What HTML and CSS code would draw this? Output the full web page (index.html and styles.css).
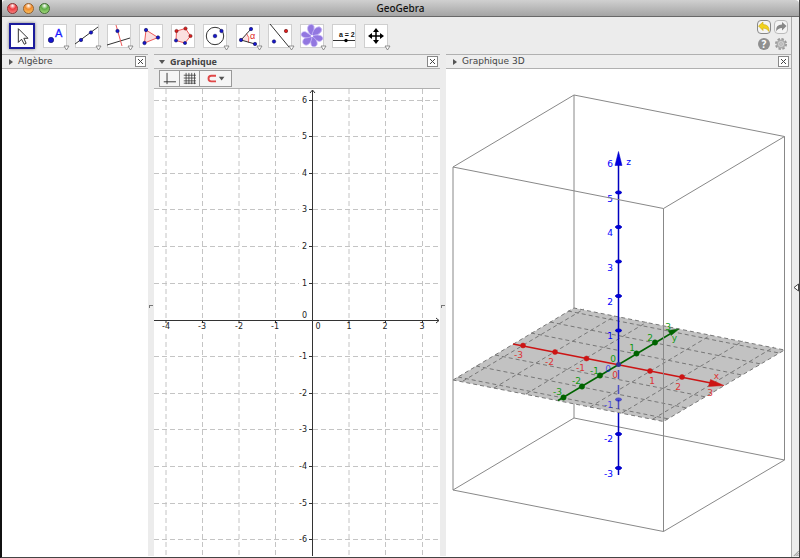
FILE: index.html
```
<!DOCTYPE html>
<html lang="fr">

<head>
  <meta charset="UTF-8" />
  <meta name="viewport" content="width=device-width, initial-scale=1.0" />
  <title>GeoGebra</title>
  <link rel="stylesheet" href="styles.css">
</head>

<body>
  <div class="window">
    <header class="titlebar">
      <div class="lights">
        <button class="light red" aria-label="Fermer"></button>
        <button class="light orange" aria-label="Réduire"></button>
        <button class="light green" aria-label="Agrandir"></button>
      </div>
      <h1 class="title">GeoGebra</h1>
    </header>

    <div class="body">
      <div class="main">
        <div class="toolbar">
          <div class="tools">
            <button class="tool active" aria-label="Déplacer">
              <svg viewBox="0 0 24 24"><path d="M8 4v15l3.500-3.500 3 5.500 2-1-2.500-5.500h4.500z" fill="#fff" stroke="#222" /></svg>
            </button>
            <button class="tool" aria-label="Point">
              <svg viewBox="0 0 24 24">
                <circle class="blue" cx="8" cy="16" r="2.700" />
                <text x="12" y="13" class="letter">A</text>
                <path class="drop" d="M21 22h5l-2.500 4z" />
              </svg>
            </button>
            <button class="tool" aria-label="Droite">
              <svg viewBox="0 0 24 24">
                <path class="ink" d="M0 20L23 3" />
                <circle class="blue" cx="6" cy="16" r="1.700" /><circle class="blue" cx="16" cy="8.500" r="1.700" />
                <path class="drop" d="M21 22h5l-2.500 4z" />
              </svg>
            </button>
            <button class="tool" aria-label="Perpendiculaire">
              <svg viewBox="0 0 24 24">
                <path class="ink" d="M0 21L23 14" /><path class="rose" d="M9 1L15 22" />
                <circle class="blue" cx="10.500" cy="7" r="1.700" />
                <path class="drop" d="M21 22h5l-2.500 4z" />
              </svg>
            </button>
            <button class="tool" aria-label="Polygone">
              <svg viewBox="0 0 24 24">
                <path class="rose area" d="M7 6l12 7.500L5.500 19z" />
                <circle class="blue" cx="7" cy="6" r="1.700" /><circle class="blue" cx="19" cy="13.500" r="1.700" /><circle class="blue" cx="5.500" cy="19" r="1.700" />
              </svg>
            </button>
            <button class="tool" aria-label="Polygone régulier">
              <svg viewBox="0 0 24 24">
                <path class="rose area" d="M5.500 7l9-2.500 5 7.500-5.500 7-9-2.500z" />
                <circle class="crimson" cx="5.500" cy="7" r="1.600" /><circle class="crimson" cx="14.500" cy="4.500" r="1.600" /><circle class="crimson" cx="19.500" cy="12" r="1.600" />
                <circle class="blue" cx="14" cy="19" r="1.600" /><circle class="blue" cx="5" cy="16.500" r="1.600" />
              </svg>
            </button>
            <button class="tool" aria-label="Cercle">
              <svg viewBox="0 0 24 24">
                <circle class="ink" cx="12" cy="12" r="8.700" />
                <circle class="blue" cx="12" cy="12" r="1.800" /><circle class="blue" cx="18.500" cy="7" r="1.700" />
                <path class="drop" d="M21 22h5l-2.500 4z" />
              </svg>
            </button>
            <button class="tool" aria-label="Angle">
              <svg viewBox="0 0 24 24">
                <path d="M5 16l5.500-5.500a8 8 0 0 1 2 8z" class="area" />
                <path d="M10.500 9.500a9 9 0 0 1 2 9" class="rose" />
                <path class="ink" d="M15 5L5 16l14 4" />
                <circle class="blue" cx="5" cy="16" r="1.700" /><circle class="blue" cx="15" cy="5" r="1.700" /><circle class="blue" cx="19" cy="20" r="1.700" />
                <text x="14" y="15" class="alpha">α</text>
                <path class="drop" d="M21 22h5l-2.500 4z" />
              </svg>
            </button>
            <button class="tool" aria-label="Symétrie axiale">
              <svg viewBox="0 0 24 24">
                <path class="ink" d="M2 0l19 23" />
                <circle class="blue" cx="6" cy="17.500" r="1.700" /><circle class="crimson" cx="18" cy="7" r="1.700" />
                <path class="drop" d="M21 22h5l-2.500 4z" />
              </svg>
            </button>
            <button class="tool" aria-label="Image">
              <svg viewBox="0 0 24 24">
                <g class="petals">
                  <path d="M12 12C8 9 6 4 9 1q3-2 5 1 1 4-2 10z" />
                  <path d="M12 12C12 7 16 2 20 3q3 2 1 5-3 4-9 4z" />
                  <path d="M12 12c5-2 10-1 11 2 0 3-4 4-5 3-3-1-5-2-6-5z" />
                  <path d="M12 12c4 3 6 6 5 9-2 3-6 2-6-1-1-3 0-5 1-8z" />
                  <path d="M12 12c0 5-3 10-7 9-4-2-2-6 0-7z" />
                  <path d="M12 12C8 15 2 14 1 11c0-3 3-4 5-3z" />
                </g>
                <circle cx="12" cy="12" r="1" fill="#fff" />
                <path class="drop" d="M21 22h5l-2.500 4z" />
              </svg>
            </button>
            <button class="tool" aria-label="Curseur">
              <svg viewBox="0 0 24 24">
                <text x="7" y="13" class="slider">a = 2</text>
                <path class="ink" d="M1 16.500h22" /><circle cx="14" cy="16.500" r="1.700" />
              </svg>
            </button>
            <button class="tool" aria-label="Déplacer Graphique">
              <svg viewBox="0 0 24 24">
                <path d="M12 7v10M7 12h10" stroke="#000" stroke-width="1.500" />
                <path d="M12 4l3 4H9zM12 20l3-4H9zM4 12l4-3v6zM20 12l-4-3v6z" />
                <path class="drop" d="M21 22h5l-2.500 4z" />
              </svg>
            </button>
          </div>
          <div class="actions">
            <button class="action framed undo" aria-label="Annuler">
              <svg viewBox="1 1 12 12"><path d="M1.500 6l4.500-4v2.500q6.500 0 6 7-2-3.500-6-3.500v2.500z" /></svg>
            </button>
            <button class="action framed" aria-label="Rétablir">
              <svg viewBox="1 1 12 12"><path d="M12.500 6L8 2v2.500q-6.500 0-6 7 2-3.500 6-3.500v2.500z" /></svg>
            </button>
            <button class="action help" aria-label="Aide">?</button>
            <button class="action" aria-label="Préférences">
              <svg viewBox="0 0 14 14">
                <circle cx="7" cy="7" r="5" fill="none" stroke="#999" stroke-width="2" stroke-dasharray="2.400 1.500" />
                <circle cx="7" cy="7" r="3.800" fill="#ccc" stroke="#aaa" stroke-width="1.500" />
                <circle cx="7" cy="7" r="1.200" fill="#eee" stroke="#888" stroke-width="0.600" />
              </svg>
            </button>
          </div>
        </div>

        <div class="views">
          <section class="view">
            <div class="view-head">
              <span class="arrow"></span>
              <h2 class="view-title">Algèbre</h2>
              <button class="close" aria-label="Fermer Algèbre"></button>
            </div>
            <div class="canvas"></div>
          </section>

          <div class="divider"></div>

          <section class="view">
            <div class="view-head">
              <span class="arrow open"></span>
              <h2 class="view-title current">Graphique</h2>
              <button class="close" aria-label="Fermer Graphique"></button>
            </div>
            <div class="stylebar">
              <button class="style-btn" aria-label="Axes"><svg viewBox="0 0 20 16"><path class="ink" d="M7.500 2v12M4 11.500h13" /></svg></button>
              <button class="style-btn" aria-label="Grille"><svg viewBox="0 0 20 16"><path class="ink thin" d="M6.500 2v12M9.500 2v12M12.500 2v12M15.500 2v12M4 4.500h13M4 7.500h13M4 10.500h13M4 13h13" /></svg></button>
              <button class="style-btn wide" aria-label="Capture d'un point"><svg viewBox="0 0 32 16"><path d="M16 5h-5a3 3 0 0 0 0 6h5" fill="none" stroke="#e04848" stroke-width="2" /><path d="M19 6h6l-3 4z" fill="#555" /></svg></button>
            </div>
            <div class="canvas">
              <svg class="plot" viewBox="154 89 286 467" preserveAspectRatio="xMidYMid slice">
                <g class="grid">
                  <path d="M154 100.500h145M154 136.500h145M154 173.500h145M154 209.500h145M154 246.500h145M154 283.500h145M154 356.500h140M154 393.500h140M154 429.500h140M154 466.500h140M154 503.500h140M154 539.500h140" />
                  <path d="M313 100.500h127M313 136.500h127M313 173.500h127M313 209.500h127M313 246.500h127M313 283.500h127M313 356.500h127M313 393.500h127M313 429.500h127M313 466.500h127M313 503.500h127M313 539.500h127" />
                  <path d="M166 89v231M202.500 89v231M239 89v231M275.500 89v231M349 89v231M385.500 89v231M422.500 89v231" />
                  <path d="M166 334v222M202.500 334v222M239 334v222M275.500 334v222M349 334v222M385.500 334v222M422.500 334v222" />
                </g>
                <g class="axes">
                  <path d="M154 320.500h285M312.500 90v466M436 318l3 2.500-3 2.500M310 93l2.500-3 2.500 3" />
                  <path d="M166 320v3M202.500 320v3M239 320v3M275.500 320v3M349 320v3M385.500 320v3M422.500 320v3" />
                  <path d="M309 100.500h4M309 136.500h4M309 173.500h4M309 209.500h4M309 246.500h4M309 283.500h4M309 356.500h4M309 393.500h4M309 429.500h4M309 466.500h4M309 503.500h4M309 539.500h4" />
                </g>
                <g class="nums middle">
                  <text x="166" y="329">-4</text><text x="202" y="329">-3</text><text x="239" y="329">-2</text><text x="275" y="329">-1</text>
                  <text x="318" y="329">0</text><text x="349" y="329">1</text><text x="385" y="329">2</text><text x="422" y="329">3</text>
                </g>
                <g class="nums end">
                  <text x="307" y="103">6</text><text x="307" y="139">5</text><text x="307" y="176">4</text><text x="307" y="212">3</text>
                  <text x="307" y="249">2</text><text x="307" y="286">1</text><text x="307" y="318">0</text><text x="307" y="359">-1</text>
                  <text x="307" y="396">-2</text><text x="307" y="432">-3</text><text x="307" y="469">-4</text><text x="307" y="506">-5</text><text x="307" y="542">-6</text>
                </g>
              </svg>
            </div>
          </section>

          <div class="divider"></div>

          <section class="view">
            <div class="view-head">
              <span class="arrow"></span>
              <h2 class="view-title">Graphique 3D</h2>
              <button class="close" aria-label="Fermer Graphique 3D"></button>
            </div>
            <div class="canvas">
              <svg class="plot" viewBox="446 69 345 487" preserveAspectRatio="xMidYMid meet">
                <!-- back edges -->
                <path class="edge" d="M574 95v323M453 490l121-72L784.500 460" />
                <path class="plane" d="M453 380l121-72 210.500 42L663.500 421.500z" />
                <path class="mesh" d="M463 381l121-72M494 388l121-72M526 394l121-72M590 407l121-72M622 413l121-72M653 419l121-72M458 377l211 42M476 366l211 42M495 355l211 42M531 333l211 42M550 322l211 42M568 311l211 42" />

                <g class="axis-z">
                  <path d="M618.500 165v200M618.500 413v62" />
                  <path d="M618.500 370v43" stroke-dasharray="9 6" class="hidden-part" />
                  <path class="tip" d="M618.500 151.500l3.500 14h-7z" />
                  <ellipse cx="618.500" cy="192.500" rx="3" ry="1.500" /><ellipse cx="618.500" cy="227" rx="3" ry="1.500" /><ellipse cx="618.500" cy="261.500" rx="3" ry="1.500" /><ellipse cx="618.500" cy="296" rx="3" ry="1.500" /><ellipse cx="618.500" cy="330.500" rx="3" ry="1.500" />
                  <ellipse cx="618.500" cy="399.500" rx="3" ry="1.500" class="hidden-part" /><ellipse cx="618.500" cy="434" rx="3" ry="1.500" /><ellipse cx="618.500" cy="468" rx="3" ry="1.500" />
                </g>
                <g class="axis-x">
                  <path d="M513 344l198 39" />
                  <path class="tip" d="M724 385.500l-15.500 1 2-7z" />
                  <circle cx="523" cy="345.500" r="2.500" /><circle cx="555" cy="352" r="2.500" /><circle cx="586.500" cy="358.500" r="2.500" /><circle cx="650" cy="371" r="2.500" /><circle cx="682" cy="377" r="2.500" />
                </g>
                <g class="axis-y">
                  <path d="M558 400.500L670 334" />
                  <path class="tip" d="M679 329l-11 1.500 3 5z" />
                  <circle cx="563.500" cy="397.500" r="2.700" /><circle cx="582" cy="386.500" r="2.700" /><circle cx="600" cy="375.500" r="2.700" /><circle cx="636.500" cy="353.500" r="2.700" /><circle cx="655" cy="342.500" r="2.700" />
                </g>
                <circle cx="618.500" cy="364.500" r="2.500" fill="#333399" />

                <g class="nums3d z-nums">
                  <text x="613" y="167">6</text><text x="613" y="202">5</text><text x="613" y="236">4</text><text x="613" y="271">3</text><text x="613" y="305">2</text><text x="613" y="339">1</text>
                  <text x="611" y="372" class="faded">0</text><text x="613" y="408" class="faded">-1</text><text x="613" y="442">-2</text><text x="613" y="477">-3</text><text x="631" y="165">z</text>
                </g>
                <g class="nums3d x-nums">
                  <text x="523" y="358">-3</text><text x="554" y="365">-2</text><text x="585" y="371">-1</text><text x="618" y="378">0</text><text x="655" y="384">1</text><text x="681" y="390">2</text><text x="713" y="396">3</text><text x="719" y="379">x</text>
                </g>
                <g class="nums3d y-nums">
                  <text x="562" y="395">-3</text><text x="581" y="384">-2</text><text x="599" y="374">-1</text><text x="616" y="362">0</text><text x="635" y="351">1</text><text x="653" y="341">2</text><text x="671" y="330">3</text><text x="677" y="341">y</text>
                </g>

                <!-- front edges -->
                <path class="edge" d="M453 490V167l121-72L784.500 136.500V460L663.500 531.500L453 490M453 167l210.500 41.500L784.500 136.500M663.500 208.500v323" />
              </svg>
            </div>
          </section>
        </div>
      </div>

      <aside class="sidebar">
        <button class="expand" aria-label="Ouvrir le panneau"><svg viewBox="0 0 6 9"><path d="M5.500 1v7L1 4.500z" fill="#fff" stroke="#444" /></svg></button>
        <svg class="grip" viewBox="0 0 8 8"><path d="M1 8l7-7M3.500 8L8 3.500M6 8l2-2" fill="none" stroke="#777" /></svg>
      </aside>
    </div>
  </div>
</body>

</html>
```

FILE: styles.css
```
* {
  margin: 0;
  padding: 0;
  box-sizing: border-box;
}

body {
  font-family: "Noto Sans", "Open Sans", sans-serif;
  font-size: 10px;
  color: #333;
}

button {
  border: none;
  background: none;
  cursor: pointer;
}

svg {
  display: block;
}

.window {
  display: flex;
  flex-direction: column;
  height: 100vh;
  border: 1px solid #444;
  border-top: none;
  border-left: 2px solid #111;
  background: #fff;
}

/* title bar */
.titlebar {
  display: grid;
  grid-template-columns: 1fr auto 1fr;
  align-items: center;
  height: 17px;
  background: linear-gradient(#d0d0d0, #a4a4a4);
  border-bottom: 1px solid #686868;
  border-radius: 4px 4px 0 0;
}

.lights {
  display: flex;
  gap: 5px;
  padding-left: 5px;
}

.light {
  width: 11px;
  height: 11px;
  border: 1px solid #555;
  border-radius: 50%;
}

.red {
  background: radial-gradient(circle at 50% 20%, #fff, #ee3b40 40%, #f79a96);
  border-color: #8c3333;
}

.orange {
  background: radial-gradient(circle at 50% 20%, #fff, #f08a2c 40%, #ffd36d);
  border-color: #96602c;
}

.green {
  background: radial-gradient(circle at 50% 20%, #fff, #5fae45 40%, #b8e58c);
  border-color: #446f36;
}

.title {
  font-size: 10px;
  line-height: 16px;
  font-weight: 500;
  color: #111;
}

.body {
  display: flex;
  flex: 1;
  min-height: 0;
}

.main {
  display: flex;
  flex-direction: column;
  flex: 1;
  min-width: 0;
}

/* toolbar */
.toolbar {
  display: flex;
  justify-content: space-between;
  align-items: center;
  height: 37px;
  padding: 0 3px 0 7px;
  background: #ececec;
}

.tools {
  display: flex;
  align-items: center;
  justify-content: space-between;
  width: 379px;
}

.tool {
  width: 24px;
  height: 24px;
  background: #fff;
  box-shadow: inset 0 0 0 1px #cfcfcf;
}

.tool svg {
  width: 24px;
  height: 24px;
  overflow: visible;
}

.tool.active {
  width: 26px;
  height: 26px;
  border: 2px solid #1c1c9c;
  box-shadow: 0 0 3px #777;
}

.tool.active svg {
  width: 22px;
  height: 22px;
}

.ink {
  fill: none;
  stroke: #333;
}

.thin {
  stroke-width: 0.8;
}

.rose {
  fill: none;
  stroke: #ee5a5a;
}

.area {
  fill: #fbe0e0;
}

.blue {
  fill: #1515d0;
  stroke: #111155;
  stroke-width: 0.6;
}

.crimson {
  fill: #dd1c1c;
  stroke: #661111;
  stroke-width: 0.6;
}

.drop {
  fill: #fff;
  stroke: #777;
  stroke-width: 0.8;
}

.letter {
  font-size: 11px;
  fill: #1a1aff;
  stroke: #1a1aff;
  stroke-width: 0.3;
}

.alpha {
  font-size: 9px;
  fill: #dd2222;
}

.slider {
  font-size: 7px;
  font-weight: 600;
  fill: #111;
}

.petals {
  fill: #9277e0;
  stroke: #c9baf7;
  stroke-width: 0.8;
}

.actions {
  display: grid;
  grid-template-columns: 14px 14px;
  gap: 3px;
}

.action {
  width: 14px;
  height: 14px;
}

.action path {
  fill: #888;
}

.framed {
  border: 1px solid #bbb;
  border-radius: 4px;
  background: #f4f4f4;
}

.undo {
  border-color: #888;
}

.undo path {
  fill: #f2d21c;
  stroke: #c9a810;
  stroke-width: 0.6;
}

.help {
  width: 12px;
  height: 12px;
  margin: 1px;
  border-radius: 50%;
  background: #8f8f8f;
  color: #fff;
  font: 700 10px/12px "Noto Sans", sans-serif;
}

/* views */
.views {
  display: grid;
  grid-template-columns: 146fr 6px 286fr 6px 345fr;
  flex: 1;
  min-height: 0;
  padding-bottom: 1px;
  background: #fff;
}

.view {
  display: flex;
  flex-direction: column;
  min-width: 0;
  min-height: 0;
}

.view-head {
  display: flex;
  align-items: center;
  height: 15px;
  padding: 0 2px 0 7px;
  background: #eee;
  border-top: 1px solid #b0b0b0;
  border-bottom: 1px solid #b0b0b0;
}

.arrow {
  width: 9px;
}

.arrow::before {
  content: "";
  display: block;
  width: 0;
  border: 3px solid transparent;
  border-left: 4px solid #555;
  border-right: none;
}

.arrow.open {
  margin-left: -2px;
  margin-right: 2px;
}

.arrow.open::before {
  border: 3px solid transparent;
  border-top: 4px solid #555;
  border-bottom: none;
}

.view-title {
  flex: 1;
  font-family: "DejaVu Sans", sans-serif;
  font-size: 9px;
  line-height: 13px;
  font-weight: 400;
  color: #444;
}

.view-title.current {
  font-family: "Noto Sans", sans-serif;
  font-weight: 700;
}

.close {
  width: 11px;
  height: 11px;
  border: 1px solid #888;
  background:
    linear-gradient(45deg, transparent 46%, #444 46%, #444 54%, transparent 54%) center / 5px 5px no-repeat,
    linear-gradient(-45deg, transparent 46%, #444 46%, #444 54%, transparent 54%) center / 5px 5px no-repeat,
    #fff;
}

.stylebar {
  display: flex;
  align-items: center;
  height: 20px;
  padding-left: 5px;
  background: #ececec;
  border-bottom: 1px solid #b0b0b0;
}

.style-btn {
  width: 21px;
  height: 17px;
  margin-right: -1px;
  border: 1px solid #999;
  background: #f5f5f5;
}

.style-btn.wide {
  width: 33px;
}

.style-btn svg {
  height: 15px;
  margin: 0 auto;
}

.canvas {
  flex: 1;
  min-height: 0;
  background: #fff;
}

.divider {
  position: relative;
  background: #ececec;
}

.divider::after {
  content: "";
  position: absolute;
  left: 1px;
  top: 50%;
  width: 3px;
  height: 2px;
  border-top: 1px solid #777;
  border-left: 1px solid #777;
}

.plot {
  width: 100%;
  height: 100%;
}

/* 2D view */
.grid {
  fill: none;
  stroke: #c4c4c4;
  stroke-dasharray: 5 3;
}

.axes {
  fill: none;
  stroke: #333;
}

.nums {
  font-family: "DejaVu Sans", sans-serif;
  font-size: 8px;
  fill: #222;
}

.middle {
  text-anchor: middle;
}

.end {
  text-anchor: end;
}

/* 3D view */
.edge {
  fill: none;
  stroke: #888;
}

.plane {
  fill: #c2c2c2;
  stroke: #777;
  stroke-dasharray: 4 3;
}

.mesh {
  fill: none;
  stroke: #777;
  stroke-dasharray: 4 3;
}

.axis-z {
  fill: #0000e0;
  stroke: #0000c0;
}

.axis-x {
  fill: #cc1414;
  stroke: #cc1414;
}

.axis-y {
  fill: #006400;
  stroke: #006400;
}

.axis-x path,
.axis-y path,
.axis-z path {
  stroke-width: 1.5;
}

.axis-x .tip,
.axis-y .tip,
.axis-z .tip,
.axis-x circle,
.axis-y circle {
  stroke-width: 0.5;
}

.hidden-part {
  opacity: 0.6;
}

.nums3d {
  font-family: "DejaVu Sans", sans-serif;
  font-size: 9px;
  text-anchor: end;
}

.z-nums {
  fill: #0000ff;
}

.faded {
  opacity: 0.6;
}

.x-nums {
  fill: #dd3333;
}

.y-nums {
  fill: #119911;
}

/* right strip */
.sidebar {
  display: flex;
  flex-direction: column;
  justify-content: space-between;
  width: 8px;
  padding-left: 1px;
  background: #ececec;
  border-left: 1px solid #aaa;
}

.sidebar::before {
  content: "";
  height: 8px;
}

.expand,
.expand svg {
  width: 6px;
  height: 9px;
}

.grip {
  width: 6px;
  height: 8px;
}
```
